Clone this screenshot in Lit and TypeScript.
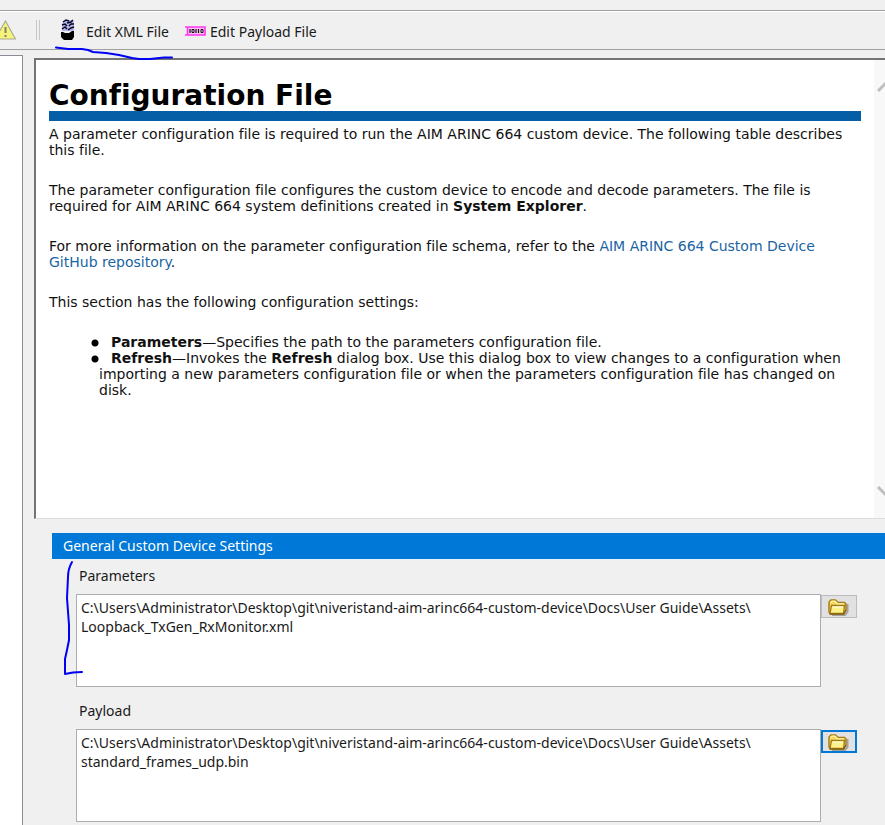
import { LitElement, html, css, svg } from "lit";
import { customElement, property } from "lit/decorators.js";

const folderIcon = svg`
  <path d="M5 17 H18 L20.500 14 V6" fill="none" stroke="#77777a" stroke-width="2" opacity=".6"/>
  <path d="M2 14 V4 L4 2 H8.500 L11 4.500 H17.500 L19 6 V12 L16.500 16 H3.500 Z" fill="#f5d85a" stroke="#a47a14" stroke-width="1.400"/>
  <path d="M3.500 4.500 L5 3.200 H8 L10.500 5.800 H17" fill="none" stroke="#fff7b0" stroke-width="1.300"/>
  <path d="M3 15.500 L4.500 7.500 H17.500 L16.500 15.500 Z" fill="#fdf28a" stroke="#a47a14" stroke-width="1.300"/>
  <path d="M5.500 9 H16" fill="none" stroke="#fffce0" stroke-width="1.200"/>
  <path d="M2.500 16 H16.500 L19 12" fill="none" stroke="#7d5808" stroke-width="1.200"/>`;

@customElement("path-field")
class PathField extends LitElement {
  @property() label = "";
  @property() value = "";
  @property({ type: Boolean }) active = false;

  static styles = css`
    :host { display: block; }
    .label {
      display: block;
      padding-left: 3px;
      font-size: 14px;
      line-height: 20px;
      margin-bottom: 8px;
    }
    .row { display: flex; align-items: flex-start; }
    .box {
      flex: 1;
      min-width: 0;
      height: 93px;
      box-sizing: border-box;
      margin: 0;
      padding: 3px 4px;
      border: 1px solid #abadb3;
      outline: none;
      resize: none;
      overflow: hidden;
      background: #fff;
      color: #1a1a1a;
      font: inherit;
      font-size: 14px;
      line-height: 19px;
      white-space: pre;
    }
    .browse {
      width: 36px;
      height: 23px;
      box-sizing: border-box;
      margin-top: 1px;
      padding: 0 0 0 5px;
      border: 1px solid #bcbcbc;
      background: #e1e1e1;
      text-align: left;
    }
    .browse.active { border: 2px solid #0078d7; padding-left: 4px; }
    .icon { display: block; width: 22px; height: 18px; }
  `;

  render() {
    return html`
      <label class="label" for="path">${this.label}</label>
      <div class="row">
        <textarea class="box" id="path" spellcheck="false" .value=${this.value}></textarea>
        <button class="browse ${this.active ? "active" : ""}" aria-label="Browse">
          <svg class="icon" viewBox="0 0 22 18">${folderIcon}</svg>
        </button>
      </div>`;
  }
}

@customElement("app-root")
class AppRoot extends LitElement {
  static styles = css`
    :host {
      display: flex;
      flex-direction: column;
      position: relative;
      min-height: 100vh;
      overflow: hidden;
      background: #f0f0f0;
      color: #1a1a1a;
      font-family: "Noto Sans", sans-serif;
      font-size: 14px;
    }
    .toolbar {
      display: flex;
      align-items: center;
      height: 38px;
      margin-top: 10px;
      border-top: 1px solid #a0a0a0;
      border-bottom: 1px solid #a0a0a0;
      box-shadow: inset 0 1px #fff;
    }
    .warn { width: 16px; height: 20px; }
    .grip {
      width: 2px;
      height: 20px;
      margin: 0 20px;
      border: solid #c8c6c2;
      border-width: 0 1px;
    }
    .tool {
      display: flex;
      align-items: center;
      margin: 4px 0 0;
      padding: 0;
      border: 0;
      background: none;
      color: inherit;
      font: inherit;
      line-height: 20px;
      white-space: nowrap;
    }
    .xml { width: 16px; height: 22px; margin: 0 10px 4px 0; }
    .payload { width: 21px; height: 10px; margin: 0 4px 2px 16px; }
    .body { display: flex; flex: 1; }
    .tree {
      width: 23px;
      margin-top: 5px;
      box-sizing: border-box;
      border: solid #8a8d96;
      border-width: 1px 1px 0 0;
      background: #fff;
    }
    .main { flex: 1; min-width: 0; margin: 8px 0 0 11px; }
    .help {
      display: flex;
      min-height: 461px;
      box-sizing: border-box;
      border: solid #747474;
      border-width: 2px 0 1px 2px;
      border-bottom-color: #dcdcdc;
      background: #fff;
    }
    .doc {
      flex: 1;
      padding: 20px 13px 0;
      color: #111;
      font-family: "DejaVu Sans", sans-serif;
      font-size: 14px;
      font-variant-ligatures: none;
      line-height: 16px;
    }
    .title {
      margin: 0 0 5px;
      border-bottom: 10px solid #065fa6;
      color: #000;
      font-size: 28px;
      line-height: 31px;
    }
    .text { margin: 0 0 24px; }
    .link { color: #1a64a3; text-decoration: none; }
    .list { margin: 0; padding: 0 0 0 50px; list-style: none; }
    .item { text-indent: -8px; }
    .item::before {
      content: "";
      display: inline-block;
      width: 20px;
      height: 8px;
      background: radial-gradient(circle at 4px 4px, #000 3px, transparent 4px);
    }
    .scroll {
      display: flex;
      flex-direction: column;
      justify-content: space-between;
      width: 11px;
      background: #f8f8f8;
    }
    .chevron { display: block; width: 11px; height: 12px; margin: 20px 0; }
    .settings { margin: 14px 0 0 18px; }
    .heading {
      margin: 0;
      padding-left: 11px;
      background: #0078d7;
      color: #fff;
      font-size: 14px;
      font-weight: 400;
      line-height: 26px;
    }
    .fields {
      display: grid;
      gap: 14px;
      padding: 7px 28px 0 24px;
    }
    .ink {
      position: absolute;
      top: 0;
      left: 0;
      width: 200px;
      height: 700px;
      pointer-events: none;
    }
  `;

  render() {
    return html`
      <header class="toolbar">
        <svg class="warn" viewBox="0 0 16 20">
          <path d="M5.500 1 L15.500 19 H-5 Z" fill="#f6f37a" stroke="#a9a99c" stroke-width="1.200"/>
          <path d="M5.500 7 V13 M5.500 15 V17" stroke="#83835c" stroke-width="2"/>
        </svg>
        <span class="grip"></span>
        <button class="tool">
          <svg class="xml" viewBox="0 0 16 22">
            <path d="M3 3 L5 1 H12 L14 3 V12 H2 V5 Z" fill="#b4b4f0"/>
            <path d="M3 3 L6 1 L9 2 M7 4 L11 3 L13 1 M2 6 L5 5 L7 7 M9 7 L11 5 L14 5 M2 10 L5 8 L7 10 M8 11 L11 9 L14 8" stroke="#08081c" stroke-width="1.500" fill="none"/>
            <path d="M1 13 H3 L5 14 H9 L12 12 H14 V18 L12 21 H4 L1 18 Z" fill="#000"/>
          </svg>
          Edit XML File
        </button>
        <button class="tool">
          <svg class="payload" viewBox="0 0 21 10">
            <rect x="2" y="1" width="18" height="8" fill="#ffc0fa"/>
            <path d="M0 1 H20 V9 H0 M2.500 1 V9" fill="none" stroke="#ff35f0" stroke-width="1.600"/>
            <path d="M5 3 V7 M11 3 V7 M13.500 3 V7" stroke="#111" stroke-width="1.200"/>
            <path d="M7 3.500 H9 V6.500 H7 Z M16 3.500 H18 V6.500 H16 Z" fill="none" stroke="#111"/>
          </svg>
          Edit Payload File
        </button>
      </header>

      <div class="body">
        <aside class="tree"></aside>
        <main class="main">
          <section class="help">
            <article class="doc">
              <h1 class="title">Configuration File</h1>
              <p class="text">A parameter configuration file is required to run the AIM ARINC 664 custom device. The following table describes this file.</p>
              <p class="text">The parameter configuration file configures the custom device to encode and decode parameters. The file is required for AIM ARINC 664 system definitions created in <b>System Explorer</b>.</p>
              <p class="text">For more information on the parameter configuration file schema, refer to the <a class="link" href="#">AIM ARINC 664 Custom Device GitHub repository</a>.</p>
              <p class="text">This section has the following configuration settings:</p>
              <ul class="list">
                <li class="item"><b>Parameters</b>—Specifies the path to the parameters configuration file.</li>
                <li class="item"><b>Refresh</b>—Invokes the <b>Refresh</b> dialog box. Use this dialog box to view changes to a configuration when importing a new parameters configuration file or when the parameters configuration file has changed on disk.</li>
              </ul>
            </article>
            <div class="scroll">
              <svg class="chevron" viewBox="0 0 11 12"><path d="M4 11 L12 3" stroke="#bfbfbf" stroke-width="3"/></svg>
              <svg class="chevron" viewBox="0 0 11 12"><path d="M4 1 L12 9" stroke="#bfbfbf" stroke-width="3"/></svg>
            </div>
          </section>

          <section class="settings">
            <h2 class="heading">General Custom Device Settings</h2>
            <div class="fields">
              <path-field
                label="Parameters"
                .value=${"C:\\Users\\Administrator\\Desktop\\git\\niveristand-aim-arinc664-custom-device\\Docs\\User Guide\\Assets\\\nLoopback_TxGen_RxMonitor.xml"}
              ></path-field>
              <path-field
                label="Payload"
                active
                .value=${"C:\\Users\\Administrator\\Desktop\\git\\niveristand-aim-arinc664-custom-device\\Docs\\User Guide\\Assets\\\nstandard_frames_udp.bin"}
              ></path-field>
            </div>
          </section>
        </main>
      </div>

      <svg class="ink" viewBox="0 0 200 700" fill="none" stroke="#0000f5" stroke-width="2" stroke-linecap="round" stroke-linejoin="round">
        <path d="M56 47.500 L68 49 H82 L88 50 L93 52 L106 53 L119 55 L132 58 L139 59 H150 L164 57.500 H172"/>
        <path d="M72 562 Q68 569 68 577 L67 598 L69 625 V640 L67 650 L65 659 V674 L73 672.500 L82 672"/>
      </svg>`;
  }
}
